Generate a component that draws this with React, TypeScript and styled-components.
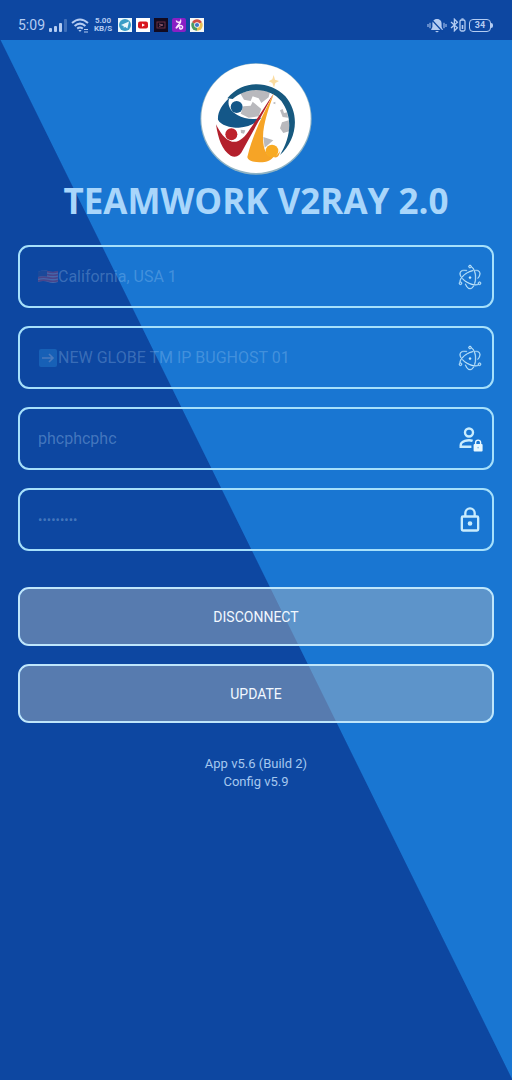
import React from "react";
import styled, { createGlobalStyle } from "styled-components";
import { SiElectron } from "react-icons/si";

const GlobalStyle = createGlobalStyle`
  *, *::before, *::after { box-sizing: border-box; }
  body {
    margin: 0;
    background: #0d47a1;
    font-family: Roboto, "Liberation Sans", sans-serif;
    color: #bbdefb;
  }
`;

const Screen = styled.div`
  display: flex;
  flex-direction: column;
  min-height: 100vh;
`;

const StatusBar = styled.header`
  display: flex;
  align-items: center;
  justify-content: space-between;
  height: 40px;
  padding: 10px 18px 0;
  background: #0d47a1;
  color: #b4ccf2;
`;

const StatusGroup = styled.div<{ $gap: number }>`
  display: flex;
  align-items: center;
  gap: ${(p) => p.$gap}px;
`;

const Clock = styled.time`
  font-size: 14px;
  line-height: 16px;
`;

const NetSpeed = styled.div`
  width: 18px;
  margin-right: 2px;
  font-size: 8px;
  line-height: 8px;
  font-weight: 700;
  text-align: center;
`;

const Main = styled.main`
  display: flex;
  flex: 1;
  flex-direction: column;
  align-items: center;
  padding: 23px 18px 24px;
  background: linear-gradient(to top right, #0d47a1 50%, #1976d2 calc(50% + 1px));
`;

const Title = styled.h1`
  margin: 2px 0 0;
  font-family: "Open Sans", "Noto Sans", sans-serif;
  font-size: 35px;
  line-height: 48px;
  font-weight: 700;
  color: #a9d6fb;
  white-space: nowrap;
`;

const Form = styled.form`
  display: flex;
  flex-direction: column;
  gap: 18px;
  width: 100%;
  margin-top: 20px;
`;

const Field = styled.label`
  display: flex;
  align-items: center;
  height: 63px;
  padding: 0 8px 0 18px;
  border: 2px solid #a6e0fb;
  border-radius: 11px;
`;

const Select = styled.select`
  flex: 1;
  min-width: 0;
  padding: 0;
  border: 0;
  outline: 0;
  appearance: none;
  background: transparent;
  font: 16px/20px Roboto, sans-serif;
  color: rgba(187, 222, 251, 0.27);
  opacity: 1;
`;

const Input = styled.input<{ $size: number }>`
  flex: 1;
  min-width: 0;
  padding: 0;
  border: 0;
  outline: 0;
  background: transparent;
  font: ${(p) => p.$size}px/20px Roboto, sans-serif;
  color: rgba(187, 222, 251, 0.32);
`;

const IconSlot = styled.span`
  display: flex;
  justify-content: center;
  width: 28px;
  color: #c9ecfd;
`;

const AtomIcon = styled(SiElectron)`
  width: 24px;
  height: 24px;
  overflow: visible;
  stroke: currentColor;
  stroke-width: 0.4;
`;

const Actions = styled.div`
  display: flex;
  flex-direction: column;
  gap: 18px;
  margin-top: 18px;
`;

const ActionButton = styled.button`
  height: 59px;
  border: 2px solid #bfe6fb;
  border-radius: 11px;
  background: rgba(178, 186, 194, 0.45);
  background-clip: padding-box;
  font: 14px/20px Roboto, sans-serif;
  color: #f2f8ff;
`;

const Version = styled.footer`
  margin-top: 32px;
  font-size: 13px;
  line-height: 18px;
  text-align: center;
  color: #a5c8ef;
`;

const Logo = () => (
  <svg width="112" height="112" viewBox="30 22 336 336" role="img" aria-label="Teamwork logo">
    <circle cx="198" cy="190" r="167" fill="#8fb3c4" />
    <circle cx="198" cy="188" r="164" fill="#fff" />
    <g fill="#b9b9bd">
      <path d="M150 112 L205 100 L240 108 L236 125 L214 142 L206 128 L188 122 L182 136 L162 132Z" />
      <path d="M160 152 L182 150 L188 138 L204 152 L214 160 L206 182 L176 186 L152 174Z" />
      <path d="M220 244 L250 254 L224 276Z" />
      <path d="M276 200 L296 194 L300 226 L280 232 L270 218Z" />
      <path d="M270 164 L278 160 L282 172 L292 170 L294 186 L278 184Z" />
      <path d="M248 142 l8 -4 v8z M152 222 l14 2 l-4 10 l-9 -2z" />
    </g>
    <path d="M112 128 C158 72 238 74 286 122 C332 176 320 252 270 298 C302 246 310 186 274 136 C236 92 168 94 128 130Z" fill="#17597f" />
    <path d="M118 126 C96 146 82 170 84 192 C92 208 120 216 146 216 C176 214 198 204 214 186 C190 194 164 190 142 178 C122 166 110 150 118 126Z" fill="#145788" />
    <circle cx="140" cy="154" r="18" fill="#145788" />
    <path d="M78 206 C84 248 96 284 122 300 C136 308 150 302 158 284 L252 112 C226 150 204 186 180 220 C164 246 146 262 126 258 C104 252 90 230 78 206Z" fill="#b3202c" />
    <circle cx="124" cy="236" r="18" fill="#bd222b" />
    <path d="M252 112 C226 164 192 224 172 304 C174 320 206 322 228 318 C238 316 244 312 250 304 C232 302 222 286 220 262 C214 212 238 156 252 112Z" fill="#f6a426" />
    <path d="M250 304 C262 308 268 302 270 286 C262 300 254 302 250 304Z" fill="#f6a426" />
    <circle cx="246" cy="286" r="19" fill="#f8aa22" />
    <path d="M251 58 L255 72 L267 76 L256 82 L252 96 L247 82 L236 77 L247 71Z" fill="#fbdca0" />
  </svg>
);

const Signal = () => (
  <svg width="18" height="13" viewBox="0 0 18 13" fill="currentColor" aria-hidden="true">
    <rect x="0" y="9" width="3" height="4" rx="1" />
    <rect x="5" y="7" width="3" height="6" rx="1" />
    <rect x="10" y="4" width="3" height="9" rx="1" />
    <rect x="15" y="0" width="3" height="13" rx="1" opacity="0.3" />
  </svg>
);

const Wifi = () => (
  <svg width="19" height="15" viewBox="0 0 19 15" fill="none" stroke="currentColor" strokeWidth="2" aria-hidden="true">
    <path d="M1 5 Q9 -2 17 5" />
    <path d="M3.6 8 Q9 3.2 14.4 8" />
    <path d="M6.2 10.6 Q9 8.4 11.8 10.6" />
    <path d="M7.4 12 L9 14 L10.6 12Z" fill="currentColor" stroke="none" />
    <path d="M13 11.5h4M13 14h4" strokeWidth="1" />
  </svg>
);

const AppIcons = () => (
  <StatusGroup $gap={4} aria-hidden="true">
    <svg width="14" height="14" viewBox="0 0 14 14">
      <rect width="14" height="14" fill="#eaf8fc" />
      <circle cx="7" cy="7" r="6" fill="#3a9dc6" />
      <path d="M3 7 L11 3.6 L9.4 10.6 L7 8.8 L5.8 10 L5.6 8Z" fill="#eaf8fc" />
    </svg>
    <svg width="14" height="14" viewBox="0 0 14 14">
      <rect width="14" height="14" fill="#fff" />
      <rect x="2" y="3.6" width="10" height="7" rx="2" fill="#d8161e" />
      <path d="M6 5.4 L9 7.1 L6 8.8Z" fill="#fff" />
    </svg>
    <svg width="14" height="14" viewBox="0 0 14 14">
      <rect width="14" height="14" fill="#120a20" />
      <rect x="3" y="4" width="8" height="6" fill="none" stroke="#6b3044" />
      <path d="M5 6 L9 7 L5 8.4" fill="none" stroke="#8a5366" />
    </svg>
    <svg width="14" height="14" viewBox="0 0 14 14">
      <rect width="14" height="14" rx="2" fill="#8a1fc4" />
      <path d="M4.4 2.4 C4.4 4.6 7.6 5 8.6 3 C9 5.6 5.6 6.6 4 10.4 C5.6 8.4 8 7 9.6 7.6 C11.4 8.4 10.6 11.4 8.4 11 C7.2 10.6 7.4 9.4 8.4 9.2" fill="none" stroke="#fbe6ff" strokeWidth="1.5" />
    </svg>
    <svg width="14" height="14" viewBox="0 0 14 14">
      <rect width="14" height="14" fill="#f6f8f6" />
      <path d="M7 7 L2 4.2 A5.8 5.8 0 0 1 12 4.2Z" fill="#d05045" />
      <path d="M7 7 L12 4.2 A5.8 5.8 0 0 1 7 12.8Z" fill="#e8c055" />
      <path d="M7 7 L7 12.8 A5.8 5.8 0 0 1 2 4.2Z" fill="#4d9a62" />
      <circle cx="7" cy="7" r="2.8" fill="#fff" />
      <circle cx="7" cy="7" r="2.1" fill="#4277c8" />
    </svg>
  </StatusGroup>
);

const BellOff = () => (
  <svg width="20" height="15" viewBox="0 0 20 15" aria-hidden="true">
    <path d="M10 1 C13.5 1 14.6 3.4 14.6 6 L14.6 9 L16 12 H4 L5.4 9 V6 C5.4 3.4 6.5 1 10 1Z M8 13h4l-2 1.6z" fill="currentColor" />
    <path d="M1 6v3M3 4.8v5.4M17 4.8v5.4M19 6v3" stroke="currentColor" />
    <path d="M4 1 L16 14" stroke="#0d47a1" strokeWidth="1.2" />
  </svg>
);

const Bluetooth = () => (
  <svg width="16" height="14" viewBox="0 0 16 14" fill="none" stroke="currentColor" strokeWidth="1.3" aria-hidden="true">
    <path d="M1 4 L7.4 9.8 L4.4 12.8 V1.2 L7.4 4.2 L1 10" />
    <rect x="10" y="2" width="5" height="11" rx="1.5" />
    <path d="M12.5 7v4" strokeWidth="1.6" />
    <path d="M11.4 1h2.2" />
  </svg>
);

const BatteryShell = styled.div`
  position: relative;
  width: 22px;
  height: 13px;
  margin-right: 3px;
  border: 1px solid currentColor;
  border-radius: 4px;
  font-size: 9px;
  line-height: 11px;
  font-weight: 700;
  text-align: center;

  &::after {
    content: "";
    position: absolute;
    top: 3px;
    right: -3px;
    width: 2px;
    height: 5px;
    border-radius: 0 2px 2px 0;
    background: currentColor;
  }
`;

const UsaFlag = () => (
  <svg width="20" height="15" viewBox="0 0 20 15" opacity="0.3" aria-hidden="true">
    <path d="M0 3 Q5 0 10 2 T20 2 V13 Q15 15 10 13 T0 13Z" fill="#c9b2c4" />
    <path d="M9 2.4 Q15 4.4 20 2.6 M9 5.4 Q15 7 20 5.6 M0 9 Q5 7.4 10 8.6 T20 8.6 M0 12 Q5 10.4 10 11.6 T20 11.6" fill="none" stroke="#d0425a" strokeWidth="1.6" />
    <path d="M0 3 Q5 0 9 2 V7.4 Q4 6.4 0 8Z" fill="#3c4f8c" />
  </svg>
);

const ArrowBadge = () => (
  <svg width="20" height="18" viewBox="0 0 20 18" opacity="0.3" aria-hidden="true">
    <rect x="1" width="18" height="18" rx="2" fill="#2f9be6" />
    <path d="M4 9h11M11 5l4 4-4 4" fill="none" stroke="#dcf0ff" strokeWidth="1.6" />
  </svg>
);

const AccountLock = () => (
  <svg width="26" height="26" viewBox="0 0 26 26" aria-hidden="true">
    <circle cx="12" cy="6.5" r="4" fill="none" stroke="currentColor" strokeWidth="2.4" />
    <path d="M15.6 14.9 C11 13.2 3.7 15.4 3.7 19.2 V20.8 H14.4" fill="none" stroke="currentColor" strokeWidth="2.4" />
    <rect x="16.6" y="18" width="9" height="7.4" rx="1" fill="#e8f8ff" />
    <path d="M18.6 18.4 V16.6 a2.5 2.5 0 0 1 5 0 V18.4" fill="none" stroke="#e8f8ff" strokeWidth="1.4" />
    <circle cx="21.1" cy="21.6" r="0.9" fill="#8fc0ea" />
  </svg>
);

const LockOutline = () => (
  <svg width="30" height="30" viewBox="0 0 24 24" fill="currentColor" aria-hidden="true">
    <path d="M12 17a2 2 0 1 1 0-4 2 2 0 0 1 0 4m6 3V10H6v10h12m0-12a2 2 0 0 1 2 2v10a2 2 0 0 1-2 2H6a2 2 0 0 1-2-2V10a2 2 0 0 1 2-2h1V6a5 5 0 0 1 10 0v2h1m-6-5a3 3 0 0 0-3 3v2h6V6a3 3 0 0 0-3-3z" />
  </svg>
);

export default function App() {
  return (
    <Screen>
      <GlobalStyle />
      <StatusBar>
        <StatusGroup $gap={4}>
          <Clock>5:09</Clock>
          <Signal />
          <Wifi />
          <NetSpeed>
            5.00
            <br />
            KB/S
          </NetSpeed>
          <AppIcons />
        </StatusGroup>
        <StatusGroup $gap={3}>
          <BellOff />
          <Bluetooth />
          <BatteryShell>34</BatteryShell>
        </StatusGroup>
      </StatusBar>
      <Main>
        <Logo />
        <Title>TEAMWORK V2RAY 2.0</Title>
        <Form onSubmit={(e) => e.preventDefault()}>
          <Field>
            <UsaFlag />
            <Select aria-label="Server" disabled>
              <option>California, USA 1</option>
            </Select>
            <IconSlot>
              <AtomIcon />
            </IconSlot>
          </Field>
          <Field>
            <ArrowBadge />
            <Select aria-label="Network" disabled>
              <option>NEW GLOBE TM IP BUGHOST 01</option>
            </Select>
            <IconSlot>
              <AtomIcon />
            </IconSlot>
          </Field>
          <Field>
            <Input $size={16} type="text" aria-label="Username" defaultValue="phcphcphc" disabled />
            <IconSlot>
              <AccountLock />
            </IconSlot>
          </Field>
          <Field>
            <Input $size={13} type="password" aria-label="Password" defaultValue="phcphcphc" disabled />
            <IconSlot>
              <LockOutline />
            </IconSlot>
          </Field>
          <Actions>
            <ActionButton type="button">DISCONNECT</ActionButton>
            <ActionButton type="button">UPDATE</ActionButton>
          </Actions>
        </Form>
        <Version>
          App v5.6 (Build 2)
          <br />
          Config v5.9
        </Version>
      </Main>
    </Screen>
  );
}
